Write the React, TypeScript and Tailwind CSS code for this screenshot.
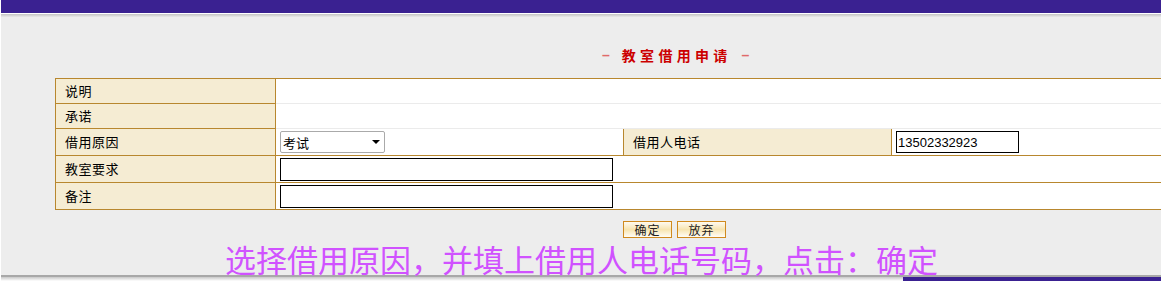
import React from "react";

function Label({ children, className = "" }: { children: React.ReactNode; className?: string }) {
  return (
    <div
      className={
        "flex items-center pl-[9px] bg-[#f5ecd3] border-r border-b border-[#b8872e] text-[13px] tracking-[0.5px] text-black " +
        className
      }
    >
      {children}
    </div>
  );
}

export default function App() {
  return (
    <div className="relative flex h-[281px] w-[1161px] flex-col overflow-hidden border-l border-white bg-[#ededed] [font-family:'Noto_Sans_CJK_SC','Noto_Sans',sans-serif]">
      {/* top bar */}
      <div className="h-[13px] shrink-0 bg-[#3a2191]" />
      <div className="h-px shrink-0 bg-white" />
      <div className="h-[3px] shrink-0 bg-gradient-to-b from-[#c4c4c4] to-[#e8e8e8]" />

      {/* title */}
      <div className="mt-[30px] flex h-[16px] shrink-0 items-center pl-[601px] font-bold text-[#cc0000]">
        <span className="text-[14px] leading-none text-[#e06a6a] [font-family:'Liberation_Sans',sans-serif]">–</span>
        <span className="ml-[12px] text-[14px] leading-none tracking-[4.3px]">教室借用申请</span>
        <span className="ml-[10px] text-[14px] leading-none text-[#e06a6a] [font-family:'Liberation_Sans',sans-serif]">–</span>
      </div>

      {/* form table */}
      <div className="ml-[54px] mt-[15px] flex w-[1243px] shrink-0 flex-col border-l border-t border-[#b8872e]">
        <div className="flex h-[25px]">
          <Label className="w-[220px]">说明</Label>
          <div className="flex-1 border-b border-[#ebebeb] bg-white" />
        </div>
        <div className="flex h-[25px]">
          <Label className="w-[220px]">承诺</Label>
          <div className="flex-1 border-b border-[#ebebeb] bg-white" />
        </div>
        <div className="flex h-[27px]">
          <Label className="w-[220px]">借用原因</Label>
          <div className="flex w-[348px] items-center border-b border-r border-[#b8872e] bg-white pl-[4px]">
            <div className="flex h-[22px] w-[105px] items-center justify-between rounded-[2px] border border-[#aaaaaa] bg-white pl-[2px] pr-[4px]">
              <span className="text-[13px] leading-none text-black">考试</span>
              <svg width="8" height="4" viewBox="0 0 8 4">
                <polygon points="0,0 8,0 4,4" fill="#000" />
              </svg>
            </div>
          </div>
          <Label className="w-[268px]">借用人电话</Label>
          <div className="flex flex-1 items-center border-b border-[#b8872e] bg-white pl-[4px]">
            <div className="flex h-[22px] w-[123px] items-center border border-black bg-white pl-[1px] text-[13px] leading-none text-black [font-family:'Liberation_Sans',sans-serif]">
              13502332923
            </div>
          </div>
        </div>
        <div className="flex h-[27px]">
          <Label className="w-[220px]">教室要求</Label>
          <div className="flex flex-1 items-center border-b border-[#b8872e] bg-white pl-[4px]">
            <div className="h-[23px] w-[333px] border border-black bg-white" />
          </div>
        </div>
        <div className="flex h-[27px]">
          <Label className="w-[220px]">备注</Label>
          <div className="flex flex-1 items-center border-b border-[#b8872e] bg-white pl-[4px]">
            <div className="h-[23px] w-[333px] border border-black bg-white" />
          </div>
        </div>
      </div>

      {/* buttons */}
      <div className="mt-[11px] flex shrink-0 gap-[5px] pl-[622px]">
        <div className="flex h-[17px] w-[49px] items-center justify-center border border-[#d08a1e] bg-gradient-to-b from-[#fffaf0] via-[#f7e4b0] to-[#fffdf7] text-[12px] leading-none tracking-[1px] text-[#222]">
          确定
        </div>
        <div className="flex h-[17px] w-[49px] items-center justify-center border border-[#d08a1e] bg-gradient-to-b from-[#fffaf0] via-[#f7e4b0] to-[#fffdf7] text-[12px] leading-none tracking-[1px] text-[#222]">
          放弃
        </div>
      </div>

      {/* bottom strip */}
      <div className="mt-auto flex h-[6px] shrink-0 flex-col">
        <div className="h-[2px] bg-[#a8a8a8]" />
        <div className="flex flex-1">
          <div className="w-[902px] bg-gradient-to-b from-[#c8c8c8] to-white" />
          <div className="flex-1 bg-[#3a2191]" />
        </div>
      </div>

      {/* annotation caption */}
      <div className="absolute left-[224px] top-[243px] whitespace-nowrap text-[31px] leading-[31px] text-[#d052ff]">
        选择借用原因，并填上借用人电话号码，点击：确定
      </div>
    </div>
  );
}
